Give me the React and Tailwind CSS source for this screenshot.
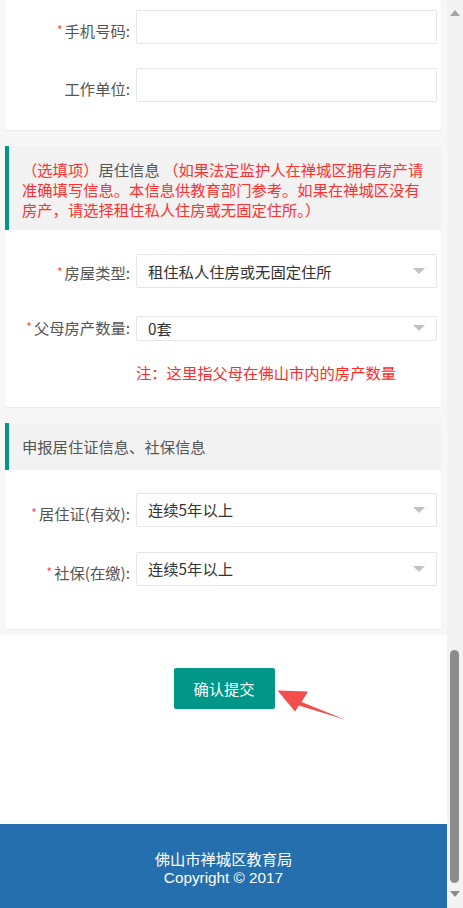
import React from 'react';

const cjk = { fontFamily: '"Noto Sans CJK SC", "Noto Sans", sans-serif' };

const Arrow = () => (
  <span className="absolute right-[11px] top-1/2 h-0 w-0 -translate-y-1/2 border-x-[6px] border-t-[6px] border-x-transparent border-t-[#c2c2c2]" />
);

const Label = ({ text, required, className = '' }) => (
  <label className={`w-[131px] shrink-0 pr-[6px] text-right leading-[20px] text-[#555] ${className}`}>
    {required && <span className="mr-[2px] align-top text-[12px] text-[#ff4d4d]">*</span>}
    {text}
  </label>
);

const Input = () => (
  <div className="h-[34px] flex-1 rounded-[2px] border border-[#e6e6e6] bg-white" />
);

const Select = ({ value }) => (
  <div className="relative flex h-[34px] flex-1 items-center rounded-[2px] border border-[#e6e6e6] bg-white pl-[11px] text-[#333]">
    {value}
    <Arrow />
  </div>
);

const Row = ({ label, required, children, labelClass = 'pt-[6px]', align = 'items-center' }) => (
  <div className={`flex ${align} pr-[4px]`}>
    <Label text={label} required={required} className={labelClass} />
    {children}
  </div>
);

const Card = ({ children, className = '' }) => (
  <div className={`rounded-[2px] bg-white shadow-[0_1px_2px_rgba(0,0,0,0.06)] ${className}`}>{children}</div>
);

export default function App() {
  return (
    <div className="flex h-[908px] w-[463px] overflow-hidden bg-white text-[15.3px]" style={cjk}>
      <div className="flex w-[447px] flex-col">
        <div className="flex flex-col gap-[16px] bg-[#f7f7f7] pb-[6px] pl-[5px] pr-[6px]">
          <Card className="flex flex-col gap-[24px] pb-[28px] pt-[10px]">
            <Row label="手机号码:" required>
              <Input />
            </Row>
            <Row label="工作单位:">
              <Input />
            </Row>
          </Card>

          <Card>
            <div className="h-[84px] border-l-[4px] border-[#009688] bg-[#f2f2f2] pb-[11px] pl-[13px] pr-[9px] pt-[13px] leading-[20px] text-[#ff3030]">
              （选填项）<span className="text-[#555]">居住信息</span> （如果法定监护人在禅城区拥有房产请准确填写信息。本信息供教育部门参考。如果在禅城区没有房产，请选择租住私人住房或无固定住所。）
            </div>
            <div className="flex flex-col gap-[28px] pb-[25px] pt-[24px]">
              <Row label="房屋类型:" required labelClass="pt-[2px]">
                <Select value="租住私人住房或无固定住所" />
              </Row>
              <Row label="父母房产数量:" required labelClass="pt-[1px]" align="items-start">
                <div className="flex flex-1 flex-col">
                  <Select value="0套" />
                  <div className="mt-[21px] leading-[20px] text-[#ff2a2a]">注：这里指父母在佛山市内的房产数量</div>
                </div>
              </Row>
            </div>
          </Card>

          <Card>
            <div className="flex h-[47px] items-center border-l-[4px] border-[#009688] bg-[#f2f2f2] pl-[13px] text-[#555]">
              申报居住证信息、社保信息
            </div>
            <div className="flex flex-col gap-[25px] pb-[43px] pt-[23px]">
              <Row label="居住证(有效):" required>
                <Select value="连续5年以上" />
              </Row>
              <Row label="社保(在缴):" required>
                <Select value="连续5年以上" />
              </Row>
            </div>
          </Card>
        </div>

        <div className="relative mt-[33px] flex justify-center">
          <button className="ml-[1px] h-[41px] w-[101px] rounded-[2px] bg-[#009688] text-white">确认提交</button>
          <svg className="absolute left-[270px] top-[16px] h-[45px] w-[85px]" viewBox="0 0 85 45">
            <polygon points="7.5,6.5 38,7.5 31.5,18 76,36 29,21.5 25,27.5" fill="#f44d4d" />
          </svg>
        </div>

        <div className="flex-1" />

        <footer className="flex h-[84px] flex-col items-center bg-[#256fae] pt-[24px] leading-[20px] text-white">
          <div>佛山市禅城区教育局</div>
          <div style={{ fontFamily: '"Liberation Sans", Arial, sans-serif' }}>Copyright © 2017</div>
        </footer>
      </div>

      <div className="flex w-[16px] flex-col items-center bg-[#f3f3f3]">
        <span className="mt-[10px] h-0 w-0 border-x-[5px] border-b-[6px] border-x-transparent border-b-[#a3a3a3]" />
        <div className="ml-[-1px] mt-[634px] h-[233px] w-[9px] rounded-full bg-[#8c8c8c]" />
        <span className="mt-[8px] h-0 w-0 border-x-[5px] border-t-[6px] border-x-transparent border-t-[#8c8c8c]" />
      </div>
    </div>
  );
}
